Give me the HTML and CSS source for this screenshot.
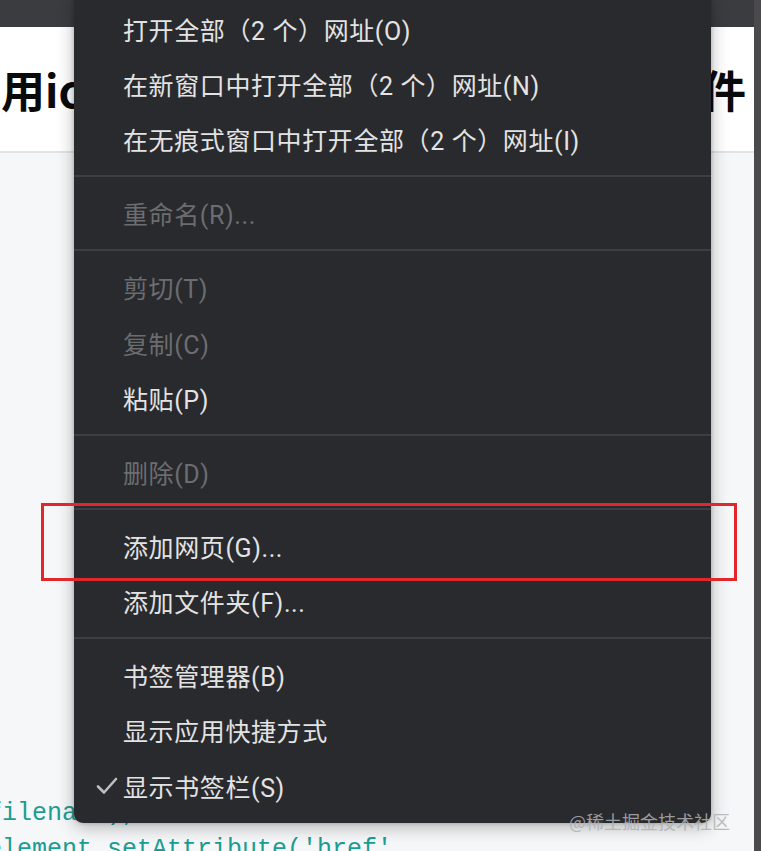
FILE: index.html
```html
<!DOCTYPE html>
<html lang="zh-CN">
<head>
<meta charset="utf-8">
<title>书签菜单</title>
<link rel="stylesheet" href="styles.css">
</head>
<body>
<div class="window">
  <div class="page">
    <div class="topbar"></div>
    <header class="title">
      <span>用icon</span>
      <span>件</span>
    </header>
    <div class="content">
      <pre class="code"><span class="line">filename),</span><span class="line">element.setAttribute('href',</span></pre>
    </div>
  </div>
  <div class="scrollbar"></div>

  <div class="menu">
    <div class="item"><span class="slot"></span><span>打开全部（2 个）网址(O)</span></div>
    <div class="item"><span class="slot"></span><span>在新窗口中打开全部（2 个）网址(N)</span></div>
    <div class="item"><span class="slot"></span><span>在无痕式窗口中打开全部（2 个）网址(I)</span></div>
    <div class="sep"></div>
    <div class="item disabled"><span class="slot"></span><span>重命名(R)...</span></div>
    <div class="sep"></div>
    <div class="item disabled"><span class="slot"></span><span>剪切(T)</span></div>
    <div class="item disabled"><span class="slot"></span><span>复制(C)</span></div>
    <div class="item"><span class="slot"></span><span>粘贴(P)</span></div>
    <div class="sep"></div>
    <div class="item disabled"><span class="slot"></span><span>删除(D)</span></div>
    <div class="sep"></div>
    <div class="item"><span class="slot"></span><span>添加网页(G)...</span></div>
    <div class="item"><span class="slot"></span><span>添加文件夹(F)...</span></div>
    <div class="sep"></div>
    <div class="item"><span class="slot"></span><span>书签管理器(B)</span></div>
    <div class="item"><span class="slot"></span><span>显示应用快捷方式</span></div>
    <div class="item"><span class="slot"><svg class="check" width="24" height="24" viewBox="0 0 24 24"><polyline points="3,12.5 9,18.5 21,5" fill="none" stroke="#bdbec0" stroke-width="2.6" stroke-linecap="round" stroke-linejoin="round"/></svg></span><span>显示书签栏(S)</span></div>
  </div>

  <div class="highlight"></div>
  <div class="watermark">@稀土掘金技术社区</div>
</div>
</body>
</html>
```
FILE: styles.css
```css
* { box-sizing: border-box; }
html, body { margin: 0; padding: 0; }
body {
  width: 761px;
  height: 851px;
  overflow: hidden;
  font-family: "Noto Sans CJK SC", "Noto Sans", sans-serif;
}
.window {
  position: relative;
  display: flex;
  width: 761px;
  height: 851px;
  overflow: hidden;
}
.page {
  flex: 1;
  display: flex;
  flex-direction: column;
  min-width: 0;
}
.topbar {
  height: 27px;
  background: #3b3c3f;
  flex: none;
}
.title {
  flex: none;
  height: 126px;
  background: #fff;
  border-bottom: 2px solid #e2e3e5;
  display: flex;
  align-items: center;
  justify-content: space-between;
  padding: 0 8px 0 1px;
  font-size: 44px;
  font-weight: 700;
  color: #0a0a0a;
  line-height: 1;
}
.content {
  flex: 1;
  background: #f6f7f8;
  display: flex;
  flex-direction: column;
  justify-content: flex-end;
  overflow: hidden;
}
.code {
  margin: 0 0 -17px -13px;
  font-family: "Liberation Mono", monospace;
  font-size: 25px;
  line-height: 36px;
  color: #1b9d93;
  display: flex;
  flex-direction: column;
}
.scrollbar {
  width: 7px;
  flex: none;
  background: #4a4a4c;
}
.menu {
  position: absolute;
  left: 74px;
  top: -7px;
  width: 637px;
  background: #292a2d;
  border-radius: 0 0 9px 9px;
  padding: 8px 0 10px;
  box-shadow: 0 4px 18px rgba(0, 0, 0, 0.28), 0 0 4px rgba(0, 0, 0, 0.2);
  color: #e3e3e4;
  font-family: Roboto, "Noto Sans CJK SC", sans-serif;
  font-size: 25px;
  letter-spacing: 0.6px;
}
.item {
  height: 55.3px;
  display: flex;
  align-items: center;
  white-space: nowrap;
}
.item.disabled { color: #6c6d70; }
.slot {
  width: 49px;
  flex: none;
  display: flex;
  justify-content: flex-end;
  padding-right: 4px;
}
.check { display: block; }
.sep {
  height: 18.7px;
  display: flex;
  align-items: center;
}
.sep::before {
  content: "";
  display: block;
  width: 100%;
  height: 2px;
  background: #3d3e42;
}
.highlight {
  position: absolute;
  left: 41px;
  top: 503px;
  width: 696px;
  height: 78px;
  border: 3px solid #e3262c;
}
.watermark {
  position: absolute;
  left: 569px;
  top: 808px;
  font-size: 18px;
  line-height: 26px;
  color: rgba(175, 176, 178, 0.85);
  white-space: nowrap;
}
```
